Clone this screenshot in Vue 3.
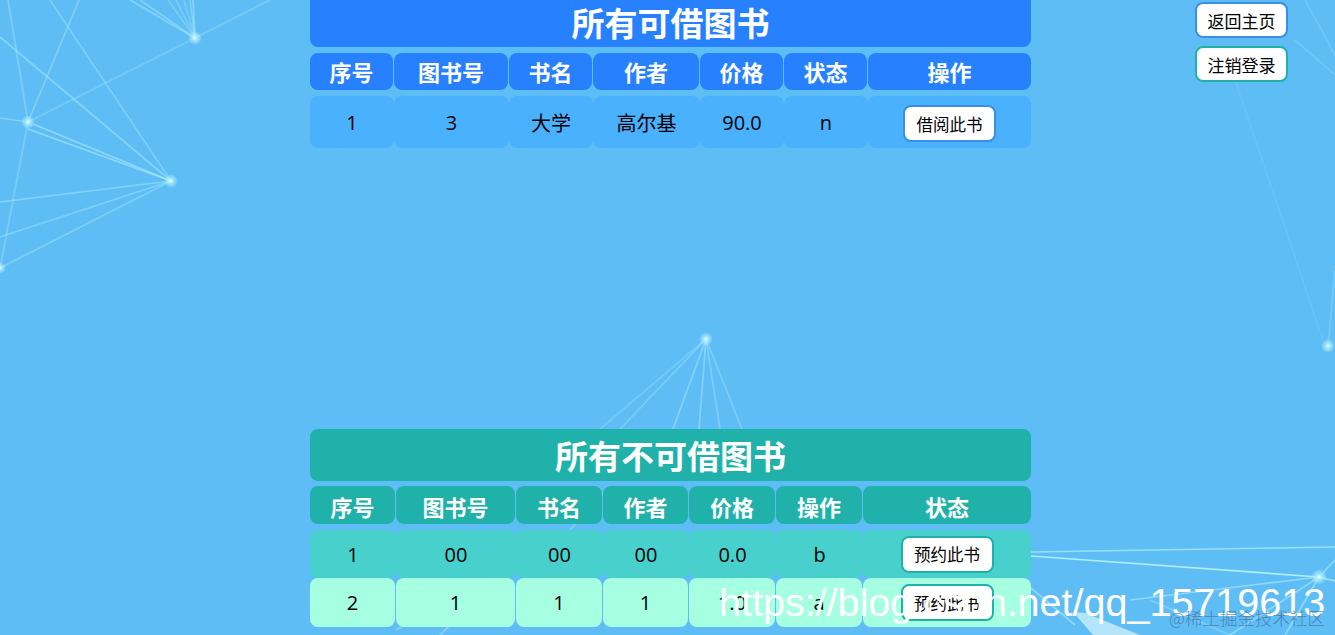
<script setup>
const head1 = ['序号', '图书号', '书名', '作者', '价格', '状态', '操作']
const head2 = ['序号', '图书号', '书名', '作者', '价格', '操作', '状态']
const rows1 = [['1', '3', '大学', '高尔基', '90.0', 'n']]
const rows2 = [
  { cls: 'mid', cells: ['1', '00', '00', '00', '0.0', 'b'] },
  { cls: 'pale', cells: ['2', '1', '1', '1', '1.0', 'a'] }
]
const lines = [
  [195, 38, 130, 0, 0.45], [195, 38, 140, 0, 0.4], [195, 38, 168, 0, 0.3], [195, 38, 176, 0, 0.3],
  [195, 38, 184, 0, 0.3], [195, 38, 190, 0, 0.4], [195, 38, 193, 0, 0.5], [195, 38, 270, 0, 0.3],
  [195, 38, 28, 122, 0.28], [28, 122, 8, 0, 0.35], [28, 122, 79, 0, 0.4], [28, 122, 0, 118, 0.4],
  [33, 124, 171, 181, 0.55], [28, 129, 171, 181, 0.55], [28, 122, 0, 268, 0.32],
  [171, 181, 50, 0, 0.36], [171, 181, 0, 37, 0.45], [171, 181, 0, 202, 0.45],
  [171, 181, 0, 237, 0.38], [171, 181, 0, 268, 0.38],
  [706, 339, 600, 429, 0.25], [706, 339, 620, 429, 0.35], [706, 339, 673, 429, 0.45],
  [706, 339, 699, 429, 0.45], [706, 339, 720, 429, 0.35], [706, 339, 742, 429, 0.35],
  [1235, 80, 1323, 340, 0.1], [1335, 270, 1328, 346, 0.25], [1305, 0, 1335, 55, 0.2], [1295, 40, 1335, 75, 0.2],
  [1031, 552, 1335, 547, 0.7], [1031, 556, 1319, 577, 1], [1319, 577, 1335, 581, 0.8],
  [1319, 577, 1130, 600, 0.55], [1319, 577, 1230, 635, 0.55], [1319, 577, 1285, 635, 0.55],
  [1031, 588, 1075, 625, 0.55], [1319, 577, 1335, 560, 0.55], [1150, 600, 1230, 635, 0.35],
  [396, 630, 410, 622, 0.4], [440, 635, 450, 625, 0.5], [610, 486, 570, 530, 0.4]
]
const nodes = [
  [195, 38, 7], [28, 122, 7], [171, 181, 7], [0, 268, 6], [706, 339, 7], [1328, 346, 7], [1319, 577, 8]
]
</script>

<template>
  <div class="page">
    <svg class="backdrop" viewBox="0 0 1335 635" aria-hidden="true">
      <defs>
        <radialGradient id="glow">
          <stop offset="0" stop-color="#e6fdff" />
          <stop offset="0.35" stop-color="#b5f0fb" stop-opacity="0.8" />
          <stop offset="1" stop-color="#b5f0fb" stop-opacity="0" />
        </radialGradient>
        <filter id="soft" x="-5%" y="-5%" width="110%" height="110%">
          <feGaussianBlur stdDeviation="0.45" />
        </filter>
      </defs>
      <g filter="url(#soft)">
        <line
          v-for="(l, i) in lines"
          :key="i"
          :x1="l[0]"
          :y1="l[1]"
          :x2="l[2]"
          :y2="l[3]"
          :stroke-opacity="l[4]"
          stroke="#aeeefa"
          stroke-width="1.7"
        />
        <polygon points="1073,612 1085,613 1140,635 1093,635" fill="#b4e5fb" />
      </g>
      <circle v-for="(n, i) in nodes" :key="'n' + i" :cx="n[0]" :cy="n[1]" :r="n[2]" fill="url(#glow)" />
    </svg>

    <div class="layout">
      <main class="main">
        <section class="block blue">
          <h1 class="title first">所有可借图书</h1>
          <div class="row head">
            <div v-for="h in head1" :key="h" class="cell">{{ h }}</div>
          </div>
          <div v-for="(r, i) in rows1" :key="i" class="row body tall">
            <div v-for="(c, j) in r" :key="j" class="cell">{{ c }}</div>
            <div class="cell"><button class="btn blue-btn">借阅此书</button></div>
          </div>
        </section>

        <section class="block green">
          <h1 class="title">所有不可借图书</h1>
          <div class="row head">
            <div v-for="h in head2" :key="h" class="cell">{{ h }}</div>
          </div>
          <div v-for="r in rows2" :key="r.cls" class="row body" :class="r.cls">
            <div v-for="(c, j) in r.cells" :key="j" class="cell">{{ c }}</div>
            <div class="cell"><button class="btn green-btn">预约此书</button></div>
          </div>
        </section>
      </main>

      <aside class="side">
        <button class="btn blue-btn wide">返回主页</button>
        <button class="btn green-btn wide">注销登录</button>
      </aside>
    </div>

    <div class="mark">https://blog.csdn.net/qq_15719613</div>
    <div class="mark2">@稀土掘金技术社区</div>
  </div>
</template>

<style>
html, body { margin: 0; background: #5fbdf6; }
</style>

<style scoped>
.page {
  position: relative;
  height: 635px;
  overflow: hidden;
  background: #5fbdf6;
  font-family: "Open Sans", "Noto Sans CJK SC", sans-serif;
}
.backdrop {
  position: absolute;
  inset: 0;
  width: 100%;
  height: 100%;
}
.layout {
  position: relative;
  display: flex;
  align-items: flex-start;
  padding-left: 310px;
}
.main {
  width: 721px;
  display: flex;
  flex-direction: column;
  gap: 281px;
}
.block {
  display: flex;
  flex-direction: column;
}
.title {
  box-sizing: border-box;
  margin: 0 0 5px;
  height: 52px;
  padding-top: 3px;
  border-radius: 8px;
  display: flex;
  align-items: center;
  justify-content: center;
  color: #fff;
  font-size: 33px;
  font-weight: 700;
  line-height: 1;
}
.title.first {
  height: 47px;
  padding-top: 0;
  margin-bottom: 6px;
  border-radius: 0 0 8px 8px;
}
.row {
  display: grid;
}
.blue .row { grid-template-columns: 84px 115px 84px 107px 84px 84px 163px; }
.green .row { grid-template-columns: 86px 120px 87px 86px 87px 87px 168px; }
.cell {
  box-sizing: border-box;
  display: flex;
  align-items: center;
  justify-content: center;
  border-radius: 8px;
  font-size: 20px;
  color: #000;
}
.head {
  height: 38px;
  margin-bottom: 6px;
}
.blue .head { height: 37px; }
.head .cell {
  margin-right: 1px;
  color: #fff;
  font-size: 22px;
  font-weight: 700;
}
.blue .head .cell { padding-bottom: 1px; }
.green .head .cell { padding-top: 1px; }
.head .cell:last-child { margin-right: 0; }
.blue .title, .blue .head .cell { background: #2781fe; }
.green .title, .green .head .cell { background: #20b2aa; }
.blue .body .cell { background: #49b1fe; }
.body { height: 48px; }
.tall { height: 52px; }
.tall .btn { margin-top: 3px; }
.mid .cell { background: #48d1cc; }
.pale { height: 49px; }
.pale .cell { background: #a5ffe0; margin-right: 1px; }
.pale .cell:last-child { margin-right: 0; }
.btn {
  box-sizing: border-box;
  width: 93px;
  height: 37px;
  padding: 0;
  background: #fff;
  border-radius: 8px;
  border: 2px solid;
  font-family: inherit;
  font-size: 16.5px;
  color: #000;
}
.blue-btn { border-color: #3a8ee6; }
.green-btn { border-color: #20b2aa; }
.wide { font-size: 17px; height: 36px; }
.side {
  display: flex;
  flex-direction: column;
  gap: 8px;
  margin-left: 164px;
  padding-top: 2px;
}
.mark {
  position: absolute;
  left: 719px;
  top: 579px;
  font-family: "Liberation Sans", sans-serif;
  font-size: 39.5px;
  line-height: 46px;
  color: #fff;
  white-space: nowrap;
}
.mark2 {
  position: absolute;
  left: 1169px;
  top: 607px;
  font-family: "Noto Sans CJK SC", sans-serif;
  font-weight: 300;
  font-size: 17.5px;
  line-height: 22px;
  color: rgba(70, 110, 150, 0.75);
  white-space: nowrap;
}
</style>
